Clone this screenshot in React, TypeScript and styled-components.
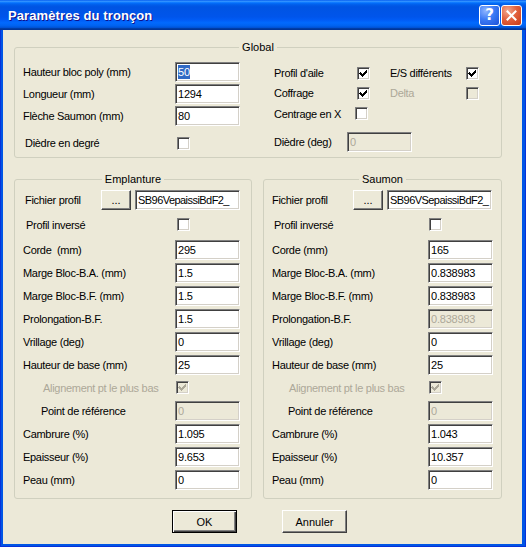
import React from "react";
import styled, { createGlobalStyle } from "styled-components";

const GlobalStyle = createGlobalStyle`
  html, body {
    margin: 0;
    padding: 0;
    background: #ffffff;
  }
  body {
    font-family: "Liberation Sans", Arial, sans-serif;
    font-size: 11px;
  }
`;

const Window = styled.div`
  width: 526px;
  height: 547px;
  box-sizing: border-box;
  display: flex;
  flex-direction: column;
  background: #0055e5;
  box-shadow: inset 1px 0 #0831d9, inset -1px 0 #0831d9, inset 0 -1px #0831d9;
`;

const TitleBar = styled.div`
  height: 30px;
  flex-shrink: 0;
  display: flex;
  align-items: center;
  padding: 0 4px 0 8px;
  background: linear-gradient(
    to bottom,
    #0058ee 0%,
    #3593ff 4%,
    #288eff 6%,
    #127dff 8%,
    #036ffc 10%,
    #0262ee 14%,
    #0057e5 20%,
    #0054e3 24%,
    #0055eb 56%,
    #005bf5 66%,
    #026afe 76%,
    #0062ef 86%,
    #0052d6 92%,
    #0040ab 94%,
    #003092 100%
  );
`;

const Title = styled.span`
  flex: 1;
  color: #ffffff;
  font-weight: bold;
  font-size: 13px;
  letter-spacing: 0.1px;
  text-shadow: 1px 1px #0f1089;
`;

const CaptionButton = styled.div<{ $close?: boolean }>`
  width: 21px;
  height: 21px;
  box-sizing: border-box;
  margin-left: 1px;
  border: 1px solid #ffffff;
  border-radius: 3px;
  display: flex;
  align-items: center;
  justify-content: center;
  color: #ffffff;
  font-family: "DejaVu Sans", sans-serif;
  font-weight: bold;
  font-size: 15px;
  background: ${(p) =>
    p.$close
      ? "radial-gradient(circle at 30% 25%, #f2a88f 0%, #e2623f 45%, #c83a16 100%)"
      : "radial-gradient(circle at 30% 25%, #8fb6ff 0%, #3d7bf5 45%, #1c52d8 100%)"};
`;

const Client = styled.div`
  flex: 1;
  margin: 0 4px 3px 3px;
  background: #ece9d8;
  display: flex;
  flex-direction: column;
`;

const Group = styled.fieldset<{ $w: number }>`
  width: ${(p) => p.$w}px;
  box-sizing: border-box;
  margin: 0;
  padding: 0;
  min-width: 0;
  border: 1px solid #d0d0bf;
  border-radius: 3px;
`;

const Legend = styled.legend`
  margin: 0 auto;
  padding: 0 3px;
  line-height: 13px;
  color: #000000;
`;

const GlobalGroup = styled(Group)`
  margin: 11px 0 0 11px;
`;

const GlobalBody = styled.div`
  display: flex;
  gap: 34px;
  padding: 7px 0 3px 8px;
`;

const Column = styled.div<{ $top?: number; $bottom?: number; $left?: number }>`
  display: flex;
  flex-direction: column;
  padding-top: ${(p) => p.$top ?? 0}px;
  padding-bottom: ${(p) => p.$bottom ?? 0}px;
  padding-left: ${(p) => p.$left ?? 0}px;
`;

const Wings = styled.div`
  display: flex;
  gap: 11px;
  margin: 15px 0 0 11px;
`;

const Row = styled.div<{ $h: number; $mt?: number }>`
  height: ${(p) => p.$h}px;
  margin-top: ${(p) => p.$mt ?? 0}px;
  display: flex;
  align-items: center;
`;

const Label = styled.span<{ $w: number; $indent?: number; $dim?: boolean; $ml?: number }>`
  width: ${(p) => p.$w}px;
  flex-shrink: 0;
  box-sizing: border-box;
  margin-left: ${(p) => p.$ml ?? 0}px;
  padding-left: ${(p) => p.$indent ?? 0}px;
  white-space: pre;
  letter-spacing: -0.3px;
  color: ${(p) => (p.$dim ? "#aca899" : "#000000")};
`;

const Field = styled.div<{ $w: number; $disabled?: boolean; $tight?: boolean; $ml?: number }>`
  width: ${(p) => p.$w}px;
  height: 20px;
  flex-shrink: 0;
  box-sizing: border-box;
  margin-left: ${(p) => p.$ml ?? 0}px;
  display: flex;
  align-items: center;
  padding: 0 2px;
  overflow: hidden;
  white-space: nowrap;
  border: 1px solid;
  border-color: #808080 #ffffff #ffffff #808080;
  box-shadow: inset 1px 1px #404040, inset -1px -1px #d4d0c8;
  background: ${(p) => (p.$disabled ? "#ece9d8" : "#ffffff")};
  color: ${(p) => (p.$disabled ? "#aca899" : "#000000")};
  letter-spacing: ${(p) => (p.$tight ? "-0.55px" : "-0.2px")};
`;

const Selected = styled.span`
  background: #316ac5;
  color: #ffffff;
  line-height: 14px;
`;

const CheckBox = styled.span<{ $disabled?: boolean; $offset?: number }>`
  width: 13px;
  height: 13px;
  flex-shrink: 0;
  box-sizing: border-box;
  margin-left: ${(p) => p.$offset ?? 0}px;
  border: 1px solid;
  border-color: #808080 #ffffff #ffffff #808080;
  box-shadow: inset 1px 1px #404040, inset -1px -1px #d4d0c8;
  background: ${(p) => (p.$disabled ? "#ece9d8" : "#ffffff")};
  display: flex;
`;

const PushButton = styled.div<{ $w: number; $h: number; $default?: boolean }>`
  width: ${(p) => p.$w}px;
  height: ${(p) => p.$h}px;
  flex-shrink: 0;
  box-sizing: border-box;
  display: flex;
  align-items: center;
  justify-content: center;
  background: #ece9d8;
  color: #000000;
  border: 1px solid;
  border-color: ${(p) => (p.$default ? "#000000" : "#ffffff #404040 #404040 #ffffff")};
  box-shadow: ${(p) =>
    p.$default
      ? "inset 1px 1px #ffffff, inset -1px -1px #404040, inset -2px -2px #808080"
      : "inset -1px -1px #808080"};
`;

const Buttons = styled.div`
  display: flex;
  justify-content: center;
  gap: 45px;
  margin-top: 11px;
  padding-right: 6px;
`;

const Check = ({ checked, disabled, offset }: { checked?: boolean; disabled?: boolean; offset?: number }) => (
  <CheckBox $disabled={disabled} $offset={offset}>
    {checked && (
      <svg width="11" height="11" viewBox="0 0 11 11" shapeRendering="crispEdges">
        <path d="M2 4h1v1h1v1h1v-1h1v-1h1v-1h1v-1h1v3h-1v1h-1v1h-1v1h-1v1h-1v-1h-1v-1h-1v-1h-1z" fill={disabled ? "#aca899" : "#000000"} />
      </svg>
    )}
  </CheckBox>
);

type WingValues = {
  file: string;
  corde: string;
  cordeLabel: string;
  ba: string;
  bf: string;
  prol: string;
  prolDisabled?: boolean;
  vrillage: string;
  hauteur: string;
  point: string;
  cambrure: string;
  epaisseur: string;
  peau: string;
};

type WingLayout = {
  width: number;
  labelW: number;
  fileLabelW: number;
  fileW: number;
  fileGap: number;
  indentFile: number;
  indentInverse: number;
  indentAlign: number;
  indentPoint: number;
  checkInverse: number;
  checkAlign: number;
};

const Wing = ({ title, v, l }: { title: string; v: WingValues; l: WingLayout }) => (
  <Group $w={l.width}>
    <Legend>{title}</Legend>
    <Column $top={2} $bottom={7} $left={8}>
      <Row $h={23}>
        <Label $w={l.fileLabelW} $indent={l.indentFile}>Fichier profil</Label>
        <PushButton $w={30} $h={20}>...</PushButton>
        <Field $w={l.fileW} $ml={l.fileGap} $tight>{v.file}</Field>
      </Row>
      <Row $h={27}>
        <Label $w={l.labelW} $indent={l.indentInverse}>Profil inversé</Label>
        <Check offset={l.checkInverse} />
      </Row>
      <Row $h={23}>
        <Label $w={l.labelW}>{v.cordeLabel}</Label>
        <Field $w={65}>{v.corde}</Field>
      </Row>
      <Row $h={23}>
        <Label $w={l.labelW}>Marge Bloc-B.A. (mm)</Label>
        <Field $w={65}>{v.ba}</Field>
      </Row>
      <Row $h={23}>
        <Label $w={l.labelW}>Marge Bloc-B.F. (mm)</Label>
        <Field $w={65}>{v.bf}</Field>
      </Row>
      <Row $h={23}>
        <Label $w={l.labelW}>Prolongation-B.F.</Label>
        <Field $w={65} $disabled={v.prolDisabled}>{v.prol}</Field>
      </Row>
      <Row $h={23}>
        <Label $w={l.labelW}>Vrillage (deg)</Label>
        <Field $w={65}>{v.vrillage}</Field>
      </Row>
      <Row $h={23}>
        <Label $w={l.labelW}>Hauteur de base (mm)</Label>
        <Field $w={65}>{v.hauteur}</Field>
      </Row>
      <Row $h={23}>
        <Label $w={l.labelW} $indent={l.indentAlign} $dim>Alignement pt le plus bas</Label>
        <Check checked disabled offset={l.checkAlign} />
      </Row>
      <Row $h={23}>
        <Label $w={l.labelW} $indent={l.indentPoint}>Point de référence</Label>
        <Field $w={65} $disabled>{v.point}</Field>
      </Row>
      <Row $h={23}>
        <Label $w={l.labelW}>Cambrure (%)</Label>
        <Field $w={65}>{v.cambrure}</Field>
      </Row>
      <Row $h={23}>
        <Label $w={l.labelW}>Epaisseur (%)</Label>
        <Field $w={65}>{v.epaisseur}</Field>
      </Row>
      <Row $h={23}>
        <Label $w={l.labelW}>Peau (mm)</Label>
        <Field $w={65}>{v.peau}</Field>
      </Row>
    </Column>
  </Group>
);

const emplanture: WingValues = {
  file: "SB96VepaissiBdF2_",
  cordeLabel: "Corde  (mm)",
  corde: "295",
  ba: "1.5",
  bf: "1.5",
  prol: "1.5",
  vrillage: "0",
  hauteur: "25",
  point: "0",
  cambrure: "1.095",
  epaisseur: "9.653",
  peau: "0",
};

const saumon: WingValues = {
  file: "SB96VSepaissiBdF2_",
  cordeLabel: "Corde (mm)",
  corde: "165",
  ba: "0.838983",
  bf: "0.838983",
  prol: "0.838983",
  prolDisabled: true,
  vrillage: "0",
  hauteur: "25",
  point: "0",
  cambrure: "1.043",
  epaisseur: "10.357",
  peau: "0",
};

const emplantureLayout: WingLayout = {
  width: 238,
  labelW: 152,
  fileLabelW: 78,
  fileW: 105,
  fileGap: 4,
  indentFile: 2,
  indentInverse: 3,
  indentAlign: 20,
  indentPoint: 18,
  checkInverse: 2,
  checkAlign: 1,
};

const saumonLayout: WingLayout = {
  width: 239,
  labelW: 156,
  fileLabelW: 81,
  fileW: 105,
  fileGap: 4,
  indentFile: 0,
  indentInverse: 2,
  indentAlign: 17,
  indentPoint: 16,
  checkInverse: 1,
  checkAlign: 1,
};

export default function App() {
  return (
    <>
      <GlobalStyle />
      <Window>
        <TitleBar>
          <Title>Paramètres du tronçon</Title>
          <CaptionButton>?</CaptionButton>
          <CaptionButton $close>
            <svg width="11" height="11" viewBox="0 0 11 11">
              <path d="M1.5 1.5L9.5 9.5M9.5 1.5L1.5 9.5" stroke="#ffffff" strokeWidth="2" strokeLinecap="square" />
            </svg>
          </CaptionButton>
        </TitleBar>
        <Client>
          <GlobalGroup $w={488}>
            <Legend>Global</Legend>
            <GlobalBody>
              <Column>
                <Row $h={22}>
                  <Label $w={152}>Hauteur bloc poly (mm)</Label>
                  <Field $w={65}>
                    <Selected>50</Selected>
                  </Field>
                </Row>
                <Row $h={22}>
                  <Label $w={152}>Longueur (mm)</Label>
                  <Field $w={65}>1294</Field>
                </Row>
                <Row $h={22}>
                  <Label $w={152}>Flèche Saumon (mm)</Label>
                  <Field $w={65}>80</Field>
                </Row>
                <Row $h={22} $mt={5}>
                  <Label $w={152} $indent={2}>Dièdre en degré</Label>
                  <Check offset={2} />
                </Row>
              </Column>
              <Column $top={2}>
                <Row $h={20}>
                  <Label $w={83}>Profil d'aile</Label>
                  <Check checked />
                  <Label $w={76} $ml={20}>E/S différents</Label>
                  <Check checked />
                </Row>
                <Row $h={20}>
                  <Label $w={83}>Coffrage</Label>
                  <Check checked />
                  <Label $w={76} $ml={20} $dim>Delta</Label>
                  <Check disabled />
                </Row>
                <Row $h={21}>
                  <Label $w={81}>Centrage en X</Label>
                  <Check />
                </Row>
                <Row $h={20} $mt={8}>
                  <Label $w={73}>Dièdre (deg)</Label>
                  <Field $w={65} $disabled>0</Field>
                </Row>
              </Column>
            </GlobalBody>
          </GlobalGroup>
          <Wings>
            <Wing title="Emplanture" v={emplanture} l={emplantureLayout} />
            <Wing title="Saumon" v={saumon} l={saumonLayout} />
          </Wings>
          <Buttons>
            <PushButton $w={65} $h={23} $default>OK</PushButton>
            <PushButton $w={65} $h={23}>Annuler</PushButton>
          </Buttons>
        </Client>
      </Window>
    </>
  );
}
